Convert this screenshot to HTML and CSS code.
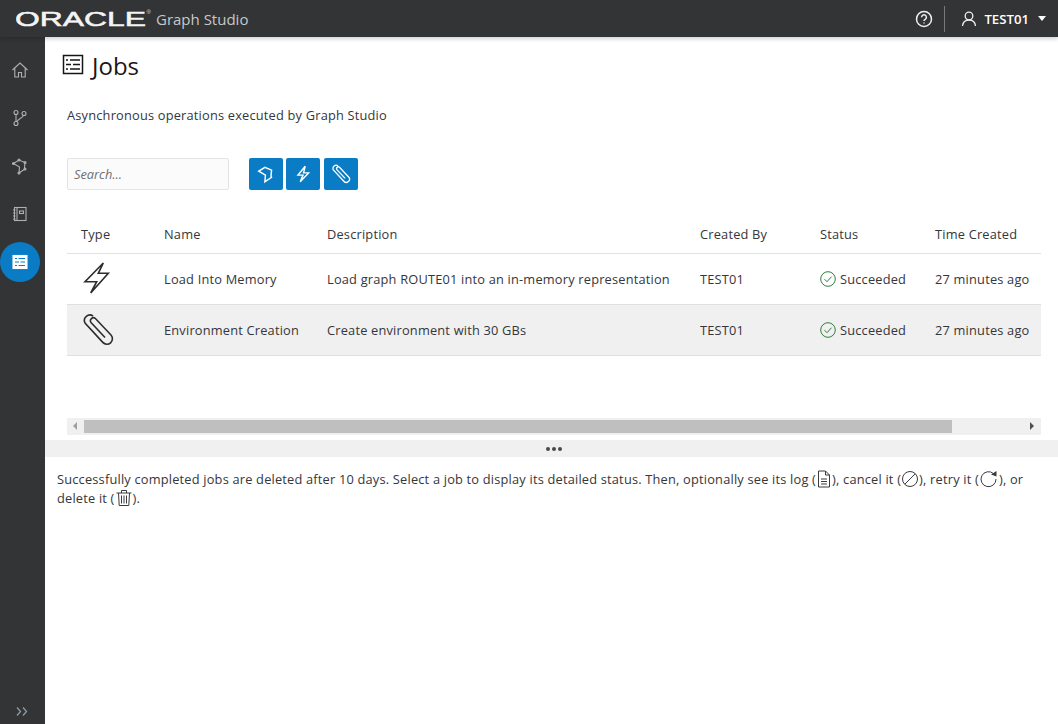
FILE: index.html
```html
<!DOCTYPE html>
<html lang="en">
<head>
<meta charset="utf-8">
<title>Jobs - Graph Studio</title>
<link rel="stylesheet" href="styles.css">
</head>
<body>
<header class="topbar">
  <div class="brand">
    <svg class="logo" width="140" height="22" viewBox="0 0 140 22"><text x="-1" y="18.500" textLength="131" lengthAdjust="spacingAndGlyphs" class="logo-text">ORACLE</text><text x="130.500" y="7" class="logo-reg">®</text></svg>
    <span class="product">Graph Studio</span>
  </div>
  <div class="top-actions">
    <svg class="top-icon" width="18" height="18" viewBox="0 0 18 18"><circle cx="9" cy="9" r="7.500"/><path d="M6.600 7.200a2.400 2.400 0 1 1 3.600 2.100c-.8.500-1.200.9-1.200 1.800"/><path d="M9 12.400v1.200"/></svg>
    <span class="top-sep"></span>
    <svg class="top-icon user-icon" width="16" height="16" viewBox="0 0 16 16"><circle cx="8" cy="5" r="3.800"/><path d="M1.500 15c.4-3.600 2.800-6 6.500-6s6.100 2.400 6.500 6"/></svg>
    <span class="user-name">TEST01</span>
    <span class="caret"></span>
  </div>
</header>
<div class="shell">
  <nav class="sidebar">
    <a class="nav-item"><svg width="18" height="18" viewBox="0 0 18 18"><path d="M1.500 9 9 2l7.500 7M3.800 7.500V16h3.700v-4.500h3V16h3.700V7.500"/></svg></a>
    <a class="nav-item"><svg width="18" height="18" viewBox="0 0 18 18"><circle cx="5" cy="3.500" r="2"/><circle cx="13" cy="4.500" r="2"/><circle cx="5" cy="14.500" r="2"/><path d="M5 5.500v7M12.500 6.500C12 9 7 9.500 5.800 12.700"/></svg></a>
    <a class="nav-item"><svg width="18" height="18" viewBox="0 0 18 18"><path d="M2.500 6.500 8 3l6 2.500-.5 5.500.5 1L8 16 8.500 10z"/><circle cx="2.500" cy="6.500" r="1"/><circle cx="8" cy="3" r="1"/><circle cx="14" cy="5.500" r="1"/><circle cx="14" cy="12" r="1"/><circle cx="8" cy="16" r="1"/></svg></a>
    <a class="nav-item"><svg width="18" height="18" viewBox="0 0 18 18"><rect x="3.500" y="2.500" width="11.500" height="13"/><path d="M6 2.500v13M2 5h2.500M2 8h2.500M2 11h2.500M2 14h2.500"/><rect x="8.500" y="6" width="4" height="2.500"/></svg></a>
    <a class="nav-item nav-active"><svg width="16" height="16" viewBox="0 0 16 16"><rect class="solid" x="1" y="1.500" width="14" height="13"/><path class="cut" d="M3 4.500h2M6.500 4.500H13M3 8h4M8.500 8H13M3 11.500h2M6.500 11.500H13"/></svg></a>
    <span class="nav-spacer"></span>
    <svg class="expand" width="12" height="9" viewBox="0 0 12 9"><path d="M1 .5 4.500 4.500 1 8.500M7 .5l3.500 4-3.500 4"/></svg>
  </nav>
  <main class="main">
    <section class="upper">
      <div class="title-row">
        <svg class="title-icon" width="22" height="22" viewBox="0 0 22 22"><rect x="1.500" y="1.500" width="19" height="18"/><path d="M4 6h2M8 6h10M4 10.500h5M11 10.500h7M4 15h2M8 15h10"/></svg>
        <h1>Jobs</h1>
      </div>
      <p class="subtitle">Asynchronous operations executed by Graph Studio</p>
      <div class="toolbar">
        <input class="search" type="text" placeholder="Search...">
        <div class="tool-buttons">
          <button class="tool-btn"><svg width="20" height="20" viewBox="0 0 18 18"><path d="M2.500 6.500 8 3l6 2.500-.5 5.500.5 1L8 16 8.500 10z"/></svg></button>
          <button class="tool-btn"><svg width="20" height="20" viewBox="0 0 18 18"><path d="M11 2 4.500 10H9l-2.500 6L14 8H9.500z"/></svg></button>
          <button class="tool-btn"><svg class="clip-small" width="20" height="20" viewBox="0 0 34 34"><path d="M24 24.500 10 9.500a3 3 0 0 1 4.400-4L30 22a5.500 5.500 0 0 1-8.200 7.400L4 10a5.500 5.500 0 0 1 8-7"/></svg></button>
        </div>
      </div>
      <table class="jobs">
        <colgroup><col class="c-type"><col class="c-name"><col class="c-desc"><col class="c-by"><col class="c-status"><col class="c-time"></colgroup>
        <thead>
          <tr><th>Type</th><th>Name</th><th>Description</th><th>Created By</th><th>Status</th><th>Time Created</th></tr>
        </thead>
        <tbody>
          <tr>
            <td><svg class="row-icon" width="34" height="34" viewBox="0 0 34 34"><path d="M22.300 1 4 19.700h11.700L9.700 31 27.300 11.300H17.300z"/></svg></td>
            <td>Load Into Memory</td>
            <td>Load graph ROUTE01 into an in-memory representation</td>
            <td>TEST01</td>
            <td><span class="status"><svg width="16" height="16" viewBox="0 0 16 16"><circle cx="8" cy="8" r="7.300"/><path d="M4.500 8.200 7 10.700l4.500-5"/></svg>Succeeded</span></td>
            <td>27 minutes ago</td>
          </tr>
          <tr class="selected">
            <td><svg class="row-icon" width="34" height="34" viewBox="0 0 34 34"><path d="M24 24.500 10 9.500a3 3 0 0 1 4.400-4L30 22a5.500 5.500 0 0 1-8.200 7.400L4 10a5.500 5.500 0 0 1 8-7"/></svg></td>
            <td>Environment Creation</td>
            <td>Create environment with 30 GBs</td>
            <td>TEST01</td>
            <td><span class="status"><svg width="16" height="16" viewBox="0 0 16 16"><circle cx="8" cy="8" r="7.300"/><path d="M4.500 8.200 7 10.700l4.500-5"/></svg>Succeeded</span></td>
            <td>27 minutes ago</td>
          </tr>
        </tbody>
      </table>
      <div class="hscroll">
        <span class="arrow-left"></span>
        <span class="thumb"></span>
        <span class="arrow-right"></span>
      </div>
    </section>
    <div class="splitter"><span></span><span></span><span></span></div>
    <p class="help">Successfully completed jobs are deleted after 10 days. Select a job to display its detailed status. Then, optionally see its log (<svg class="inline-icon" width="16" height="18" viewBox="0 0 16 18"><path d="M2.500 1h7l4 4v12h-11zM9.500 1v4h4M5 9h6M5 11.500h6M5 14h6"/></svg>), cancel it (<svg class="inline-icon" width="18" height="18" viewBox="0 0 18 18"><circle cx="9" cy="9" r="7.500"/><path d="M3.800 14.200 14.200 3.800"/></svg>), retry it (<svg class="inline-icon" width="20" height="18" viewBox="0 0 20 18"><path d="M14.500 3.600A7.500 7.500 0 1 0 17 9"/><path class="solid-path" d="M12 4.500 17.500 1v5.500z"/></svg>), or delete it (<svg class="inline-icon" width="18" height="18" viewBox="0 0 18 18"><path d="M1.500 4h15M6.500 4V1.500h5V4M3.500 4l.7 12.500h9.600L14.500 4M6.500 6.500v8M9 6.500v8M11.500 6.500v8"/></svg>).</p>
  </main>
</div>
</body>
</html>
```

FILE: styles.css
```css
* { box-sizing: border-box; }
html, body { margin: 0; height: 100%; overflow: hidden; }
body {
  font-family: "Open Sans", "Noto Sans", sans-serif;
  font-size: 12.800px;
  letter-spacing: .2px;
  color: #35363a;
  background: #fff;
  display: flex;
  flex-direction: column;
}
svg { fill: none; stroke: currentColor; flex: none; }

.topbar {
  height: 37px;
  flex: none;
  background: #323436;
  color: #fff;
  display: flex;
  align-items: center;
  justify-content: space-between;
  padding: 0 12px 0 16px;
  box-shadow: 0 2px 4px rgba(0, 0, 0, .18);
  position: relative;
}
.brand { display: flex; align-items: center; }
.logo { stroke: none; margin-top: -1px; }
.logo-text { font-family: "Liberation Sans", sans-serif; font-size: 21px; font-weight: 400; letter-spacing: 0; fill: #f4f4f4; stroke: #f4f4f4; stroke-width: .55; }
.logo-reg { font-family: "Liberation Sans", sans-serif; font-size: 6px; letter-spacing: 0; fill: #ddd; }
.product { font-size: 15px; letter-spacing: 0; color: #c7c8c9; }
.top-actions { display: flex; align-items: center; }
.top-icon { stroke-width: 1.500; color: #f0f0f0; }
.top-sep { width: 1px; height: 26px; background: #77797b; margin: 0 16px 0 11px; }
.user-icon { stroke-width: 1.300; }
.user-name { font-size: 13.200px; font-weight: 600; letter-spacing: 0; margin-left: 7px; }
.caret { width: 0; height: 0; margin-left: 9px; border-style: solid; border-width: 5px 4.500px 0; border-color: #fff transparent transparent; }

.shell { flex: 1; display: flex; min-height: 0; }
.sidebar {
  width: 45px;
  flex: none;
  background: #323436;
  color: #aeb0b1;
  display: flex;
  flex-direction: column;
  align-items: center;
  padding: 13px 0 8px;
}
.nav-item { width: 40px; height: 40px; margin: 0 5px 8px 0; border-radius: 50%; display: flex; align-items: center; justify-content: center; }
.nav-item svg { stroke-width: 1.100; }
.nav-active { background: #0a7cc5; color: #fff; }
.solid { fill: #fff; stroke: #fff; }
.cut { stroke: #0a7cc5; stroke-width: 1; }
.nav-spacer { flex: 1; }
.expand { color: #8f9aa3; stroke-width: 1.300; margin-right: 1px; }

.main { flex: 1; min-width: 0; display: flex; flex-direction: column; }
.upper { padding: 0 17px 0 22px; height: 403px; flex: none; }
.title-row { display: flex; align-items: center; height: 58px; margin-left: -5px; }
.title-icon { stroke: #16161a; stroke-width: 1.500; margin-top: -3px; }
h1 { margin: -1px 0 0 8px; font-size: 24px; font-weight: 400; letter-spacing: 0; color: #1d1518; line-height: 30px; }
.subtitle { margin: 12px 0 0; line-height: 17px; }
.toolbar { display: flex; margin-top: 34px; }
.search {
  width: 162px;
  height: 32px;
  background: #fbfbfb;
  border: 1px solid #e3e3e3;
  border-radius: 2px;
  padding: 0 6px;
  font: italic 12.800px "Open Sans", sans-serif;
}
.search::placeholder { color: #6f6f72; opacity: 1; }
.tool-buttons { display: flex; gap: 3px; margin-left: 20px; }
.tool-btn {
  width: 34px;
  height: 32px;
  padding: 0;
  background: #0a7cc5;
  color: #fff;
  border: 0;
  border-radius: 2px;
  display: flex;
  align-items: center;
  justify-content: center;
}
.tool-btn:last-child { margin-left: 1px; }
.tool-btn svg { stroke-width: 1.300; }
.tool-btn .clip-small { stroke-width: 2.200; }

.jobs { width: 974px; table-layout: fixed; border-collapse: collapse; margin-top: 25px; }
.c-type { width: 97px; }
.c-name { width: 163px; }
.c-desc { width: 373px; }
.c-by { width: 120px; }
.c-status { width: 115px; }
.c-time { width: 106px; }
th { height: 38px; padding: 0; text-align: left; font-weight: 400; border-bottom: 1px solid #e1e1e1; white-space: nowrap; }
td { height: 51px; padding: 0; border-bottom: 1px solid #dfdfdf; white-space: nowrap; overflow: hidden; }
th:first-child, td:first-child { padding-left: 14px; }
.selected td { background: #f0f0f0; }
.row-icon { display: block; stroke: #2d2d30; stroke-width: 1.600; }
.status { display: flex; align-items: center; gap: 4px; }
.status svg { stroke: #2f7d3b; stroke-width: 1; }

.hscroll { height: 17px; width: 974px; margin-top: 62px; background: #f0f0f0; display: flex; align-items: center; }
.arrow-left { width: 0; height: 0; margin-left: 6px; border-style: solid; border-width: 4px 4px 4px 0; border-color: transparent #a0a0a0 transparent transparent; }
.thumb { width: 868px; height: 13px; margin-left: 7px; background: #bfbfbf; }
.arrow-right { width: 0; height: 0; margin-left: 78px; border-style: solid; border-width: 4px 0 4px 4px; border-color: transparent transparent transparent #505050; }

.splitter { height: 17px; flex: none; padding-left: 5px; background: #f0f0f0; display: flex; align-items: center; justify-content: center; gap: 2px; }
.splitter span { width: 4px; height: 4px; border-radius: 50%; background: #4a4a4d; }

.help { margin: 13px 24px 0 12px; line-height: 19px; }
.inline-icon { vertical-align: -4px; stroke-width: 1; color: #3b3b3f; }
.solid-path { fill: currentColor; stroke: none; }
```
